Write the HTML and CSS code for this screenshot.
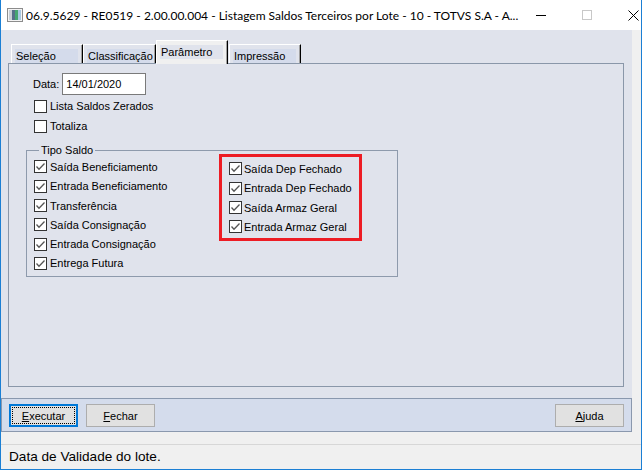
FILE: index.html
```html
<!DOCTYPE html>
<html lang="pt">
<head>
  <meta charset="UTF-8">
  <title>Listagem Saldos Terceiros por Lote</title>
  <link rel="stylesheet" href="styles.css">
</head>
<body>
  <div class="window">
    <div class="titlebar">
      <svg class="app-icon" viewBox="0 0 16 16" width="16" height="16">
        <rect x="0.5" y="1.5" width="15" height="13" fill="#f4f4f4" stroke="#8c8c8c"/>
        <rect x="2" y="3" width="3" height="10" fill="#c9cfd6"/>
        <rect x="5" y="3" width="3" height="10" fill="#56708a"/>
        <rect x="8" y="3" width="3" height="10" fill="#45a672"/>
        <rect x="11" y="3" width="3" height="10" fill="#a9c9e2"/>
      </svg>
      <span class="title">06.9.5629 - RE0519 - 2.00.00.004 - Listagem Saldos Terceiros por Lote - 10 - TOTVS S.A - A...</span>
      <div class="caption-btns">
        <span class="cap-btn"><svg width="10" height="10"><path d="M0 5.5h10" stroke="#000"/></svg></span>
        <span class="cap-btn"><svg width="10" height="10"><rect x="0.5" y="0.5" width="9" height="9" fill="none" stroke="#c8c8c8"/></svg></span>
        <span class="cap-btn"><svg width="11" height="11"><path d="M0.5 0.5l10 10M10.5 0.5l-10 10" stroke="#000"/></svg></span>
      </div>
    </div>

    <div class="client">
      <div class="main">
        <div class="tabs">
          <div class="tab"><span class="tab-label">Seleção</span></div>
          <div class="tab tab-wide"><span class="tab-label">Classificação</span></div>
          <div class="tab active"><span class="tab-label">Parâmetro</span></div>
          <div class="tab tab-last"><span class="tab-label">Impressão</span></div>
        </div>

        <div class="tab-page">
          <div class="field-row">
            <label>Data:</label>
            <input class="date-input" type="text" value="14/01/2020">
          </div>
          <div class="chk-row top-chk first"><span class="chk"></span>Lista Saldos Zerados</div>
          <div class="chk-row top-chk"><span class="chk"></span>Totaliza</div>

          <div class="group">
            <span class="group-title">Tipo Saldo</span>
            <div class="group-col">
              <div class="chk-row"><span class="chk"><svg viewBox="0 0 11 11"><path d="M1.5 5.5L4 8.2L9.5 2.5"/></svg></span>Saída Beneficiamento</div>
              <div class="chk-row"><span class="chk"><svg viewBox="0 0 11 11"><path d="M1.5 5.5L4 8.2L9.5 2.5"/></svg></span>Entrada Beneficiamento</div>
              <div class="chk-row"><span class="chk"><svg viewBox="0 0 11 11"><path d="M1.5 5.5L4 8.2L9.5 2.5"/></svg></span>Transferência</div>
              <div class="chk-row"><span class="chk"><svg viewBox="0 0 11 11"><path d="M1.5 5.5L4 8.2L9.5 2.5"/></svg></span>Saída Consignação</div>
              <div class="chk-row"><span class="chk"><svg viewBox="0 0 11 11"><path d="M1.5 5.5L4 8.2L9.5 2.5"/></svg></span>Entrada Consignação</div>
              <div class="chk-row"><span class="chk"><svg viewBox="0 0 11 11"><path d="M1.5 5.5L4 8.2L9.5 2.5"/></svg></span>Entrega Futura</div>
            </div>
            <div class="group-col marked">
              <div class="chk-row"><span class="chk"><svg viewBox="0 0 11 11"><path d="M1.5 5.5L4 8.2L9.5 2.5"/></svg></span>Saída Dep Fechado</div>
              <div class="chk-row"><span class="chk"><svg viewBox="0 0 11 11"><path d="M1.5 5.5L4 8.2L9.5 2.5"/></svg></span>Entrada Dep Fechado</div>
              <div class="chk-row"><span class="chk"><svg viewBox="0 0 11 11"><path d="M1.5 5.5L4 8.2L9.5 2.5"/></svg></span>Saída Armaz Geral</div>
              <div class="chk-row"><span class="chk"><svg viewBox="0 0 11 11"><path d="M1.5 5.5L4 8.2L9.5 2.5"/></svg></span>Entrada Armaz Geral</div>
            </div>
          </div>
        </div>
      </div>

      <div class="button-bar">
        <button class="btn focused"><u>E</u>xecutar</button>
        <button class="btn btn-gap"><u>F</u>echar</button>
        <button class="btn btn-right"><u>A</u>juda</button>
      </div>

      <div class="statusbar">Data de Validade do lote.</div>
    </div>
  </div>
</body>
</html>
```

FILE: styles.css
```css
* {
  margin: 0;
  padding: 0;
}
body {
  background: #fff;
  font-family: "Liberation Sans", Arial, sans-serif;
  font-size: 11px;
  color: #000;
}

.window {
  width: 642px;
  height: 470px;
  box-sizing: border-box;
  border: 1px solid #1b7fd4;
  border-top: 0;
  background: #f0f0f0;
  display: flex;
  flex-direction: column;
}

/* title bar */
.titlebar {
  height: 30px;
  flex-shrink: 0;
  background: #fff;
  display: flex;
  align-items: center;
}
.app-icon {
  margin-left: 6px;
  flex-shrink: 0;
}
.title {
  margin-left: 3px;
  font-family: Lato, "Noto Sans", sans-serif;
  font-size: 12px;
  white-space: nowrap;
}
.caption-btns {
  margin-left: auto;
  display: flex;
}
.cap-btn {
  width: 46px;
  height: 30px;
  display: flex;
  align-items: center;
  justify-content: center;
}

.client {
  flex: 1;
  display: flex;
  flex-direction: column;
}

/* tab area */
.main {
  width: 631px;
  height: 368px;
  box-sizing: border-box;
  padding: 10px 0 0 7px;
  background: #e0e3ec;
}
.tabs {
  display: flex;
  align-items: flex-end;
  height: 23px;
  margin-left: 3px;
}
.tab {
  width: 72px;
  height: 19px;
  box-sizing: border-box;
  padding: 4px 0 0 3px;
  border-top: 1px solid #fff;
  border-left: 1px solid #fff;
  border-right: 1px solid #000;
  box-shadow: inset -1px 0 #a0a0a0;
  background: #e0e3ec;
}
.tab-wide {
  width: 73px;
}
.tab-last {
  margin-left: 1px;
}
.tab.active {
  height: 24px;
  margin-bottom: -1px;
  position: relative;
  z-index: 1;
  background: #f0f0f0;
}
.tab-label {
  display: block;
  width: 63px;
  height: 14px;
  line-height: 14px;
  padding-left: 1px;
  box-sizing: border-box;
  white-space: nowrap;
  background: #d4dbeb;
}
.tab.active .tab-label {
  background: #e0e3ec;
}

.tab-page {
  width: 616px;
  height: 324px;
  box-sizing: border-box;
  border: 1px solid #8a97a9;
  background: #e0e3ec;
}

.field-row {
  display: flex;
  align-items: center;
  margin: 9px 0 0 24px;
}
.date-input {
  margin-left: 3px;
  width: 84px;
  height: 22px;
  box-sizing: border-box;
  border: 1px solid #7a7a7a;
  padding-left: 3px;
  background: #fff;
  font-family: "Liberation Sans", Arial, sans-serif;
  font-size: 11px;
  color: #000;
  outline: none;
}

/* checkboxes */
.chk-row {
  display: flex;
  align-items: center;
  height: 19.3px;
  white-space: nowrap;
}
.top-chk {
  height: 20px;
  margin-left: 25px;
}
.top-chk.first {
  margin-top: 1px;
}
.chk {
  width: 13px;
  height: 13px;
  box-sizing: border-box;
  border: 1px solid #333;
  background: #fff;
  margin-right: 3px;
  flex-shrink: 0;
  display: flex;
}
.chk svg {
  width: 11px;
  height: 11px;
  fill: none;
  stroke: #555;
  stroke-width: 1.3;
}

/* group box */
.group {
  position: relative;
  margin: 14px 0 0 17px;
  width: 372px;
  height: 127px;
  box-sizing: border-box;
  border: 1px solid #8e9aac;
  display: flex;
  align-items: flex-start;
}
.group-title {
  position: absolute;
  top: -8px;
  left: 12px;
  padding: 0 2px;
  line-height: 14px;
  background: #e0e3ec;
}
.group-col {
  width: 185px;
  margin: 6.35px 0 0 7px;
}
.group-col.marked {
  width: 143px;
  height: 87px;
  box-sizing: border-box;
  margin: 3px 0 0 0;
  padding: 2.35px 0 0 7px;
  border: 3px solid #ed1c24;
}
.marked .chk {
  margin-right: 2px;
}

/* buttons */
.button-bar {
  width: 631px;
  height: 34px;
  box-sizing: border-box;
  border: 1px solid #8a98ae;
  background: #d4dcec;
  display: flex;
  align-items: flex-start;
  padding: 5px 7px 0 7px;
}
.btn {
  width: 69px;
  height: 23px;
  box-sizing: border-box;
  border: 1px solid #adadad;
  background: #e1e1e1;
  font-family: "Liberation Sans", Arial, sans-serif;
  font-size: 11px;
  color: #000;
}
.btn.focused {
  border-color: #0078d7;
  box-shadow: inset 0 0 0 1px #0078d7;
  outline: 1px dotted #000;
  outline-offset: -4px;
}
.btn-gap {
  margin-left: 8px;
}
.btn-right {
  margin-left: auto;
}

.statusbar {
  margin-top: 12px;
  height: 25px;
  box-sizing: border-box;
  border-top: 1px solid #d7d7d7;
  padding-left: 8px;
  line-height: 24px;
  font-size: 13.6px;
}
```
